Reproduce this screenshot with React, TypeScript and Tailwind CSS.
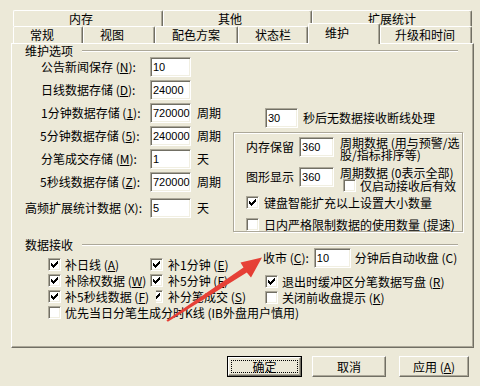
import React from "react";

const CJK = "font-['Noto_Sans_CJK_SC',sans-serif]";

function U({ c }: { c: string }) {
  return <span className="underline underline-offset-[1px] decoration-1">{c}</span>;
}

function CheckMark() {
  const runs: [number, number, number][] = [
    [6, 0, 1], [5, 1, 2], [0, 2, 1], [4, 2, 3], [0, 3, 2], [3, 3, 3], [0, 4, 5], [1, 5, 3], [2, 6, 1],
  ];
  return (
    <svg width="7" height="7" viewBox="0 0 7 7" shapeRendering="crispEdges">
      {runs.map(([x, y, w], i) => (
        <rect key={i} x={x} y={y} width={w} height={1} fill="#000" />
      ))}
    </svg>
  );
}

function Box({ checked }: { checked?: boolean }) {
  return (
    <span className="w-[13px] h-[13px] shrink-0 bg-white border border-t-[#ACA899] border-l-[#ACA899] border-r-white border-b-white shadow-[inset_1px_1px_0_#716F64,inset_-1px_-1px_0_#F1EFE2] flex items-center justify-center">
      {checked && <CheckMark />}
    </span>
  );
}

function Field({ v, className }: { v: string; className: string }) {
  return (
    <div
      className={
        "h-[20px] shrink-0 bg-white border border-t-[#ACA899] border-l-[#ACA899] border-r-white border-b-white shadow-[inset_1px_1px_0_#716F64,inset_-1px_-1px_0_#F1EFE2] flex items-center pl-[2px] text-[11px] text-black font-['Liberation_Sans',sans-serif] " +
        className
      }
    >
      {v}
    </div>
  );
}

function Tab({ label, className, selected }: { label: string; className: string; selected?: boolean }) {
  return (
    <div
      className={
        "flex items-center shrink-0 bg-[#ECE9D8] border-t border-l border-white border-r border-r-[#716F64] shadow-[inset_-1px_0_0_#ACA899] rounded-tl-[2px] rounded-tr-[2px] whitespace-nowrap leading-[12px] " +
        (selected ? "relative z-10 -mt-[3px] " : "") +
        className
      }
    >
      {label}
    </div>
  );
}

function Etch() {
  return <div className="flex-1 h-[2px] border-t border-t-[#ACA899] border-b border-b-white" />;
}

function Btn({ label, className, def }: { label: React.ReactNode; className: string; def?: boolean }) {
  return (
    <div className={"h-[21px] shrink-0 " + (def ? "border border-black " : "") + className}>
      <div className="h-full w-full bg-[#ECE9D8] border-t border-l border-white border-r border-b border-r-[#716F64] border-b-[#716F64] shadow-[inset_-1px_-1px_0_#ACA899] flex items-center justify-center p-[2px]">
        <div
          className={
            "w-full h-full flex items-center justify-center leading-[12px] " +
            (def ? "outline outline-1 outline-dotted outline-black -outline-offset-[1px]" : "")
          }
        >
          {label}
        </div>
      </div>
    </div>
  );
}

function LRow({ label, v, unit, pl }: { label: React.ReactNode; v: string; unit?: string; pl: string }) {
  return (
    <div className="flex items-center h-[20px]">
      <div className={"w-[138px] shrink-0 whitespace-nowrap leading-[14px] " + pl}>{label}</div>
      <Field v={v} className="w-[41px]" />
      {unit && <span className="ml-[6px] leading-[14px]">{unit}</span>}
    </div>
  );
}

function CRow({ checked, children, gap }: { checked?: boolean; children: React.ReactNode; gap: string }) {
  return (
    <div className={"flex items-center h-[13px] whitespace-nowrap leading-[13px] " + gap}>
      <Box checked={checked} />
      <span>{children}</span>
    </div>
  );
}

export default function App() {
  return (
    <div className={"relative w-[480px] h-[386px] bg-[#ECE9D8] text-[12px] text-black overflow-hidden " + CJK}>
      {/* tabs */}
      <div className="pt-[10px] pl-[13px]">
        <div className="flex h-[16px]">
          <Tab label="内存" className="w-[150px] pl-[55px]" />
          <Tab label="其他" className="w-[149px] pl-[54px]" />
          <Tab label="扩展统计" className="w-[160px] pl-[55px]" />
        </div>
        <div className="flex h-[17px] items-end">
          <Tab label="常规" className="w-[70px] h-[17px] pl-[16px]" />
          <Tab label="视图" className="w-[72px] h-[17px] pl-[16px]" />
          <Tab label="配色方案" className="w-[83px] h-[17px] pl-[16px]" />
          <Tab label="状态栏" className="w-[70px] h-[17px] pl-[16px]" />
          <Tab label="维护" selected className="w-[72px] h-[21px] pl-[16px] pb-[3px] -mb-[1px]" />
          <Tab label="升级和时间" className="w-[92px] h-[17px] pl-[14px]" />
        </div>
      </div>

      {/* panel */}
      <div className="ml-[11px] w-[463px] h-[305px] border-t border-l border-white border-r border-b border-r-[#716F64] border-b-[#716F64] shadow-[inset_-1px_-1px_0_#ACA899]">
        {/* header 1 */}
        <div className="flex items-center h-[14px] pl-[13px] pr-[15px] gap-[9px]">
          <span className="leading-[14px] whitespace-nowrap">维护选项</span>
          <Etch />
        </div>

        {/* body 1 */}
        <div className="flex -mt-[1px]">
          <div className="w-[221px] shrink-0 flex flex-col gap-[3px]">
            <LRow pl="pl-[29px]" label={<>公告新闻保存 (<U c="N" />):</>} v="10" />
            <LRow pl="pl-[29px]" label={<>日线数据存储 (<U c="D" />):</>} v="24000" />
            <LRow pl="pl-[29px]" label={<>1分钟数据存储 (<U c="1" />):</>} v="720000" unit="周期" />
            <LRow pl="pl-[28px]" label={<>5分钟数据存储 (<U c="5" />):</>} v="240000" unit="周期" />
            <LRow pl="pl-[29px]" label={<>分笔成交存储 (<U c="M" />):</>} v="1" unit="天" />
            <LRow pl="pl-[28px]" label={<>5秒线数据存储 (<U c="Z" />):</>} v="720000" unit="周期" />
            <div className="mt-[3px]">
              <LRow pl="pl-[13px]" label={<>高频扩展统计数据 (X):</>} v="5" unit="天" />
            </div>
          </div>

          <div className="flex flex-col pt-[51px]">
            <div className="flex items-center h-[20px] pl-[32px]">
              <Field v="30" className="w-[33px]" />
              <span className="ml-[5px] whitespace-nowrap leading-[14px]">秒后无数据接收断线处理</span>
            </div>
            <div className="mt-[4px] w-[230px] h-[100px] border border-[#ACA899] shadow-[inset_1px_1px_0_#fff,1px_1px_0_#fff] pl-[12px] pt-[4px] flex flex-col">
              <div className="flex items-start">
                <span className="h-[20px] flex items-center whitespace-nowrap leading-[14px]">内存保留</span>
                <Field v="360" className="w-[35px] ml-[5px]" />
                <div className="ml-[6px] leading-[12px] whitespace-nowrap">
                  周期数据 (用与预警/选
                  <br />
                  股/指标排序等)
                </div>
              </div>
              <div className="flex items-start mt-[6px]">
                <span className="h-[20px] flex items-center whitespace-nowrap leading-[14px]">图形显示</span>
                <Field v="360" className="w-[35px] ml-[5px]" />
                <div className="ml-[6px] flex flex-col">
                  <div className="leading-[12px] whitespace-nowrap">周期数据 (0表示全部)</div>
                  <CRow gap="gap-[4px] ml-[3px]">仅启动接收后有效</CRow>
                </div>
              </div>
              <div className="mt-[4px]">
                <CRow checked gap="gap-[5px]">键盘智能扩充以上设置大小数量</CRow>
              </div>
              <div className="mt-[9px]">
                <CRow gap="gap-[5px]">日内严格限制数据的使用数量 (提速)</CRow>
              </div>
            </div>
          </div>
        </div>

        {/* header 2 */}
        <div className="flex items-center h-[12px] mt-[7px] pl-[13px] pr-[15px] gap-[9px]">
          <span className="leading-[12px] whitespace-nowrap">数据接收</span>
          <Etch />
        </div>

        {/* body 2 */}
        <div className="-mt-[3px] pl-[36px]">
          <div className="flex items-start">
            <div className="w-[215px] shrink-0 pt-[10px] flex flex-col gap-[3px]">
              <div className="flex">
                <div className="w-[102px] shrink-0">
                  <CRow checked gap="gap-[4px]">补日线 (<U c="A" />)</CRow>
                </div>
                <CRow checked gap="gap-[5px]">补1分钟 (<U c="E" />)</CRow>
              </div>
              <div className="flex">
                <div className="w-[102px] shrink-0">
                  <CRow checked gap="gap-[4px]">补除权数据 (<U c="W" />)</CRow>
                </div>
                <CRow checked gap="gap-[5px]">补5分钟 (<U c="F" />)</CRow>
              </div>
              <div className="flex">
                <div className="w-[102px] shrink-0">
                  <CRow checked gap="gap-[4px]">补5秒线数据 (<U c="F" />)</CRow>
                </div>
                <div className="relative">
                  <CRow checked gap="gap-[5px]">补分笔成交 (<U c="S" />)</CRow>
                  <div className="absolute left-0 top-0 w-[6px] h-[13px] bg-[#ECE9D8]" />
                </div>
              </div>
            </div>

            <div className="flex flex-col">
              <div className="flex items-center h-[20px]">
                <span className="whitespace-nowrap leading-[14px]">
                  收市 (<U c="C" />):
                </span>
                <Field v="10" className="w-[37px] ml-[5px]" />
                <span className="ml-[4px] whitespace-nowrap leading-[14px]">分钟后自动收盘 (C)</span>
              </div>
              <div className="mt-[7px] ml-[2px]">
                <CRow checked gap="gap-[4px]">退出时缓冲区分笔数据写盘 (<U c="R" />)</CRow>
              </div>
              <div className="mt-[3px] ml-[2px]">
                <CRow gap="gap-[4px]">关闭前收盘提示 (<U c="K" />)</CRow>
              </div>
            </div>
          </div>
          <div className="mt-[2px]">
            <CRow gap="gap-[4px]">优先当日分笔生成分时K线 (IB外盘用户慎用)</CRow>
          </div>
        </div>
      </div>

      {/* buttons */}
      <div className="flex mt-[8px] pl-[227px]">
        <Btn def label="确定" className="w-[75px]" />
        <Btn label="取消" className="w-[74px] ml-[10px]" />
        <Btn label={<>应用 (<U c="A" />)</>} className="w-[70px] ml-[13px]" />
      </div>

      {/* red annotation arrow */}
      <svg className="absolute inset-0 pointer-events-none" width="480" height="386" viewBox="0 0 480 386">
        <defs>
          <linearGradient id="ar" x1="0" y1="0" x2="1" y2="1">
            <stop offset="0" stopColor="#f0564a" />
            <stop offset="1" stopColor="#dc2a22" />
          </linearGradient>
        </defs>
        <polygon
          points="166.4,320.2 243.5,267.5 240.5,262.5 262,257.5 251,277.5 246.8,272.5 167.8,321.8"
          fill="url(#ar)"
        />
      </svg>
    </div>
  );
}
